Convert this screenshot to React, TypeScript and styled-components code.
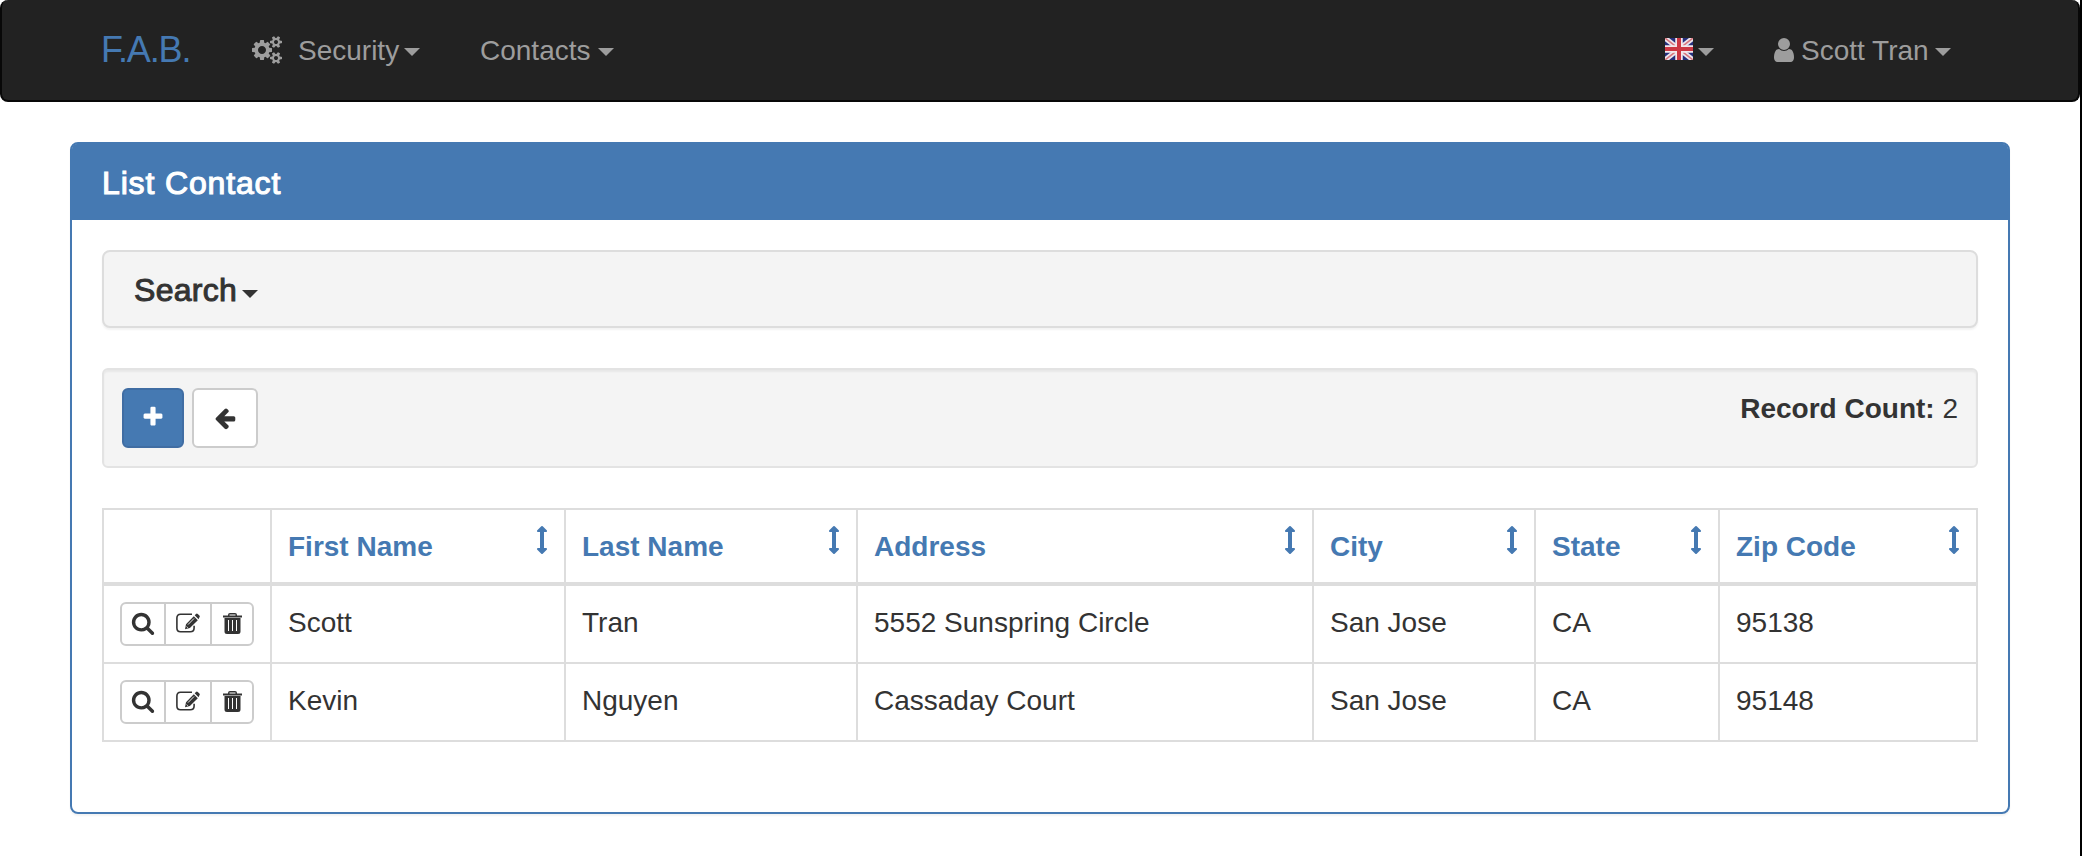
import React from "react";
import styled, { createGlobalStyle } from "styled-components";

const Global = createGlobalStyle`
  *, *::before, *::after { box-sizing: border-box; }
  body {
    margin: 0;
    background: #fff;
    color: #333;
    font: 28px/40px "Liberation Sans", Arial, sans-serif;
  }
`;

const Page = styled.div`
  min-height: 856px;
  border-right: 2px solid #000;
`;

const Navbar = styled.nav`
  height: 102px;
  display: flex;
  align-items: center;
  padding: 0 127px 0 99px;
  margin-bottom: 40px;
  background: #222;
  border: 2px solid #080808;
  border-top: 0;
  border-radius: 8px;
  color: #9d9d9d;
`;

const Brand = styled.a`
  width: 151px;
  color: #4579b2;
  font-size: 36px;
  letter-spacing: -1.1px;
`;

const NavItem = styled.a<{ $gap?: number }>`
  display: flex;
  align-items: center;
  margin-right: ${(p) => p.$gap ?? 0}px;
`;

const NavSpace = styled.div`
  flex: 1;
`;

const Caret = styled.span<{ $drop?: number }>`
  margin: ${(p) => p.$drop ?? 4}px 0 0 4px;
  border: 8px solid transparent;
  border-top-color: currentColor;
  border-bottom: 0;
`;

const Label = styled.span<{ $width: number; $gap?: number }>`
  width: ${(p) => p.$width}px;
  margin-left: ${(p) => p.$gap ?? 0}px;
  padding-top: 2px;
  white-space: nowrap;
`;

const Panel = styled.main`
  height: 672px;
  margin: 0 70px;
  border: 2px solid #4579b2;
  border-radius: 8px;
  box-shadow: 0 2px 2px rgba(0, 0, 0, 0.05);
`;

const PanelHeading = styled.header`
  height: 76px;
  padding: 21px 30px 19px;
  background: #4579b2;
  border-radius: 5px 5px 0 0;
  color: #fff;
  font-size: 32px;
  line-height: 36px;
  letter-spacing: 0.85px;
  -webkit-text-stroke: 1.1px currentColor;
`;

const PanelBody = styled.div`
  padding: 30px;
`;

const SearchBar = styled.section`
  height: 78px;
  display: flex;
  align-items: center;
  padding: 0 30px;
  margin-bottom: 40px;
  background: #f4f4f4;
  border: 2px solid #ddd;
  border-radius: 8px;
  box-shadow: 0 2px 2px rgba(0, 0, 0, 0.05);
  font-size: 32px;
`;

const SearchLabel = styled(Label)`
  letter-spacing: 0.3px;
  -webkit-text-stroke: 1px currentColor;
`;

const Well = styled.section`
  height: 100px;
  display: flex;
  align-items: flex-start;
  gap: 8px;
  padding: 18px;
  margin-bottom: 40px;
  background: #f4f4f4;
  border: 2px solid #e3e3e3;
  border-radius: 6px;
  box-shadow: inset 0 2px 2px rgba(0, 0, 0, 0.05);
`;

const Button = styled.button<{ $primary?: boolean }>`
  width: ${(p) => (p.$primary ? 62 : 66)}px;
  height: 60px;
  display: flex;
  align-items: center;
  justify-content: center;
  padding: 0;
  background: ${(p) => (p.$primary ? "#4579b2" : "#fff")};
  border: 2px solid ${(p) => (p.$primary ? "#406da3" : "#ccc")};
  border-radius: 6px;
  color: ${(p) => (p.$primary ? "#fff" : "#333")};
`;

const RecordCount = styled.div`
  margin-left: auto;
  padding-top: 1px;
  white-space: nowrap;
`;

const Table = styled.table`
  width: 1876px;
  table-layout: fixed;
  border-collapse: separate;
  border-spacing: 0;
  border-top: 2px solid #ddd;
  border-left: 2px solid #ddd;
`;

const HeadCell = styled.th`
  height: 76px;
  padding: 0 16px;
  border-right: 2px solid #ddd;
  border-bottom: 4px solid #ddd;
  color: #4579b2;
  text-align: left;
`;

const HeadContent = styled.div`
  display: flex;
  justify-content: space-between;
  align-items: flex-start;
  margin-right: -8px;
  white-space: nowrap;
`;

const HeadText = styled.span`
  padding-top: 1px;
  margin-bottom: -1px;
`;

const Cell = styled.td`
  height: 78px;
  padding: 17px 16px 15px;
  border-right: 2px solid #ddd;
  border-bottom: 2px solid #ddd;
  vertical-align: top;
`;

const ActionCell = styled(Cell)`
  padding: 16px;
`;

const ButtonGroup = styled.div`
  width: 134px;
  height: 44px;
  display: flex;
  border: 2px solid #ccc;
  border-radius: 6px;
  background: #fff;
`;

const IconButton = styled.button<{ $width: number }>`
  width: ${(p) => p.$width}px;
  display: flex;
  align-items: center;
  justify-content: center;
  padding: 0 0 2px;
  border: 0;
  background: none;
  color: #333;
  & + & { border-left: 2px solid #ccc; }
`;

const Glyph = styled.svg<{ $lift?: number }>`
  display: block;
  flex: none;
  fill: currentColor;
  margin-bottom: ${(p) => p.$lift ?? 0}px;
`;

const paths = {
  cogs: "M896 896q0-106-75-181t-181-75-181 75-75 181 75 181 181 75 181-75 75-181zm768 512q0-52-38-90t-90-38-90 38-38 90q0 53 37.5 90.5t90.5 37.5 90.5-37.5 37.5-90.5zm0-1024q0-52-38-90t-90-38-90 38-38 90q0 53 37.5 90.5t90.5 37.5 90.5-37.5 37.5-90.5zm-384 421v185q0 10-7 19.5t-16 10.5l-155 24q-11 35-32 76 34 48 90 115 7 11 7 20 0 12-7 19-23 30-82.5 89.5t-78.5 59.5q-11 0-21-7l-115-90q-37 19-77 31-11 108-23 155-7 24-30 24h-186q-11 0-20-7.5t-10-17.5l-23-153q-34-10-75-31l-118 89q-7 7-20 7-11 0-21-8-144-133-144-160 0-9 7-19 10-14 41-53t47-61q-23-44-35-82l-152-24q-10-1-17-9.5t-7-19.5v-185q0-10 7-19.5t16-10.5l155-24q11-35 32-76-34-48-90-115-7-11-7-20 0-12 7-20 22-30 82-89t79-59q11 0 21 7l115 90q34-18 77-32 11-108 23-154 7-24 30-24h186q11 0 20 7.5t10 17.5l23 153q34 10 75 31l118-89q8-7 20-7 11 0 21 8 144 133 144 160 0 8-7 19-12 16-42 54t-45 60q23 48 34 82l152 23q10 2 17 10.5t7 19.5zm640 533v140q0 16-149 31-12 27-30 52 51 113 51 138 0 4-4 7-122 71-124 71-8 0-46-47t-52-68q-20 2-30 2t-30-2q-14 21-52 68t-46 47q-2 0-124-71-4-3-4-7 0-25 51-138-18-25-30-52-149-15-149-31v-140q0-16 149-31 13-29 30-52-51-113-51-138 0-4 4-7 4-2 35-20t59-34 30-16q8 0 46 46.5t52 67.5q20-2 30-2t30 2q51-71 92-112l6-2q4 0 124 70 4 3 4 7 0 25-51 138 17 23 30 52 149 15 149 31zm0-1024v140q0 16-149 31-12 27-30 52 51 113 51 138 0 4-4 7-122 71-124 71-8 0-46-47t-52-68q-20 2-30 2t-30-2q-14 21-52 68t-46 47q-2 0-124-71-4-3-4-7 0-25 51-138-18-25-30-52-149-15-149-31v-140q0-16 149-31 13-29 30-52-51-113-51-138 0-4 4-7 4-2 35-20t59-34 30-16q8 0 46 46.5t52 67.5q20-2 30-2t30 2q51-71 92-112l6-2q4 0 124 70 4 3 4 7 0 25-51 138 17 23 30 52 149 15 149 31z",
  user: "M1536 1399q0 109-62.5 187t-150.5 78h-854q-88 0-150.5-78t-62.5-187q0-85 8.500-160.500t31.500-152 58.500-131 94-89 134.500-34.500q131 128 313 128t313-128q76 0 134.500 34.500t94 89 58.500 131 31.500 152 8.500 160.500zm-256-887q0 159-112.500 271.500t-271.500 112.500-271.500-112.500-112.500-271.500 112.500-271.500 271.500-112.500 271.500 112.500 112.500 271.500z",
  plus: "M1600 736v192q0 40-28 68t-68 28h-416v416q0 40-28 68t-68 28h-192q-40 0-68-28t-28-68v-416h-416q-40 0-68-28t-28-68v-192q0-40 28-68t68-28h416v-416q0-40 28-68t68-28h192q40 0 68 28t28 68v416h416q40 0 68 28t28 68z",
  left: "M1664 896v128q0 53-32.500 90.500t-84.500 37.500h-704l293 294q38 36 38 90t-38 90l-75 76q-37 37-90 37-52 0-91-37l-651-652q-37-37-37-90 0-52 37-91l651-650q38-38 91-38 52 0 90 38l75 74q38 38 38 91t-38 91l-293 293h704q52 0 84.500 37.500t32.500 90.500z",
  sort: "M1216 320q0 26-19 45t-45 19h-128v1024h128q26 0 45 19t19 45-19 45l-256 256q-19 19-45 19t-45-19l-256-256q-19-19-19-45t19-45 45-19h128v-1024h-128q-26 0-45-19t-19-45 19-45l256-256q19-19 45-19t45 19l256 256q19 19 19 45z",
  search: "M1216 832q0-185-131.500-316.500t-316.500-131.500-316.500 131.500-131.500 316.500 131.500 316.500 316.500 131.500 316.500-131.500 131.500-316.500zm512 832q0 52-38 90t-90 38q-54 0-90-38l-343-342q-179 124-399 124-143 0-273.500-55.500t-225-150-150-225-55.500-273.500 55.500-273.500 150-225 225-150 273.500-55.500 273.500 55.500 225 150 150 225 55.500 273.500q0 220-124 399l343 343q37 37 37 90z",
};

type IconProps = { name: keyof typeof paths; size: number; lift?: number };

function Icon({ name, size, lift }: IconProps) {
  const vw = name === "cogs" ? 1920 : 1792;
  return (
    <Glyph width={(size * vw) / 1792} height={size} viewBox={`0 0 ${vw} 1792`} $lift={lift}>
      <path d={paths[name]} />
    </Glyph>
  );
}

function EditIcon() {
  return (
    <Glyph width="24" height="20" viewBox="0 0 24 20" $lift={1}>
      <path d="M16 1.300H4.500Q.9 1.300.9 5v10q0 3.800 3.600 3.800h9.800q3.800 0 3.800-3.800v-2.200" fill="none" stroke="currentColor" strokeWidth="1.600" />
      <path d="M9 16.200l1-5L17.800 3.200l4 4-7.900 7.900zM18.700 2.300l1.300-1.400q.9-.9 1.800 0l1.600 1.700q.8.900 0 1.700L22.600 6.300z" />
      <path d="M12 11.600l6-6.100M10.600 13.600l1.200 1.100" fill="none" stroke="#fff" strokeWidth=".9" />
    </Glyph>
  );
}

function TrashIcon() {
  return (
    <Glyph width="19" height="21" viewBox="0 0 19 21">
      <path d="M5 2.500V2Q5 0 7 0h5q2 0 2 2v.5h5V4.500H0V2.500zM6.500 1.500v1h6v-1z" fillRule="evenodd" />
      <path d="M1.500 5h16V18.500q0 2.500-2.500 2.500H4q-2.500 0-2.500-2.500zM5 7v11h1V7zM9 7v11h1V7zM13 7v11h1V7z" fillRule="evenodd" />
    </Glyph>
  );
}

function Flag() {
  return (
    <Glyph width="30" height="24" viewBox="0 0 30 24" $lift={2}>
      <svg x="1" y="1" width="28" height="22" viewBox="0 0 28 22">
        <path fill="#252f7c" d="M0 0h28v22H0z" />
        <path d="M0 0l28 22M28 0L0 22" stroke="#ece6ee" strokeWidth="5" />
        <path d="M0 0l28 22M28 0L0 22" stroke="#d8767e" strokeWidth="1.600" />
        <path d="M14 0v22M0 11h28" stroke="#f3e8ec" strokeWidth="7.500" />
        <path d="M14 0v22M0 11h28" stroke="#cd3844" strokeWidth="4" />
      </svg>
    </Glyph>
  );
}

const widths = [168, 294, 292, 456, 222, 184, 258];
const headings = ["First Name", "Last Name", "Address", "City", "State", "Zip Code"];
const contacts = [
  ["Scott", "Tran", "5552 Sunspring Circle", "San Jose", "CA", "95138"],
  ["Kevin", "Nguyen", "Cassaday Court", "San Jose", "CA", "95148"],
];

export default function App() {
  return (
    <Page>
      <Global />
      <Navbar>
        <Brand>F.A.B.</Brand>
        <NavItem $gap={60}>
          <Icon name="cogs" size={28} />
          <Label $width={102} $gap={16}>Security</Label>
          <Caret />
        </NavItem>
        <NavItem>
          <Label $width={114}>Contacts</Label>
          <Caret />
        </NavItem>
        <NavSpace />
        <NavItem $gap={56}>
          <Flag />
          <Caret />
        </NavItem>
        <NavItem>
          <Icon name="user" size={28} />
          <Label $width={130} $gap={3}>Scott Tran</Label>
          <Caret />
        </NavItem>
      </Navbar>
      <Panel>
        <PanelHeading>List Contact</PanelHeading>
        <PanelBody>
          <SearchBar>
            <SearchLabel $width={104}>Search</SearchLabel>
            <Caret $drop={9} />
          </SearchBar>
          <Well>
            <Button $primary aria-label="Add"><Icon name="plus" size={24} lift={2} /></Button>
            <Button aria-label="Back"><Icon name="left" size={24} /></Button>
            <RecordCount><b>Record Count:</b> 2</RecordCount>
          </Well>
          <Table>
            <colgroup>{widths.map((w, i) => <col key={i} width={w} />)}</colgroup>
            <thead>
              <tr>
                <HeadCell />
                {headings.map((h) => (
                  <HeadCell key={h}>
                    <HeadContent><HeadText>{h}</HeadText><Icon name="sort" size={28} /></HeadContent>
                  </HeadCell>
                ))}
              </tr>
            </thead>
            <tbody>
              {contacts.map((row) => (
                <tr key={row[0]}>
                  <ActionCell>
                    <ButtonGroup>
                      <IconButton $width={42} aria-label="Show"><Icon name="search" size={24} /></IconButton>
                      <IconButton $width={46} aria-label="Edit"><EditIcon /></IconButton>
                      <IconButton $width={42} aria-label="Delete"><TrashIcon /></IconButton>
                    </ButtonGroup>
                  </ActionCell>
                  {row.map((v, i) => <Cell key={i}>{v}</Cell>)}
                </tr>
              ))}
            </tbody>
          </Table>
        </PanelBody>
      </Panel>
    </Page>
  );
}
